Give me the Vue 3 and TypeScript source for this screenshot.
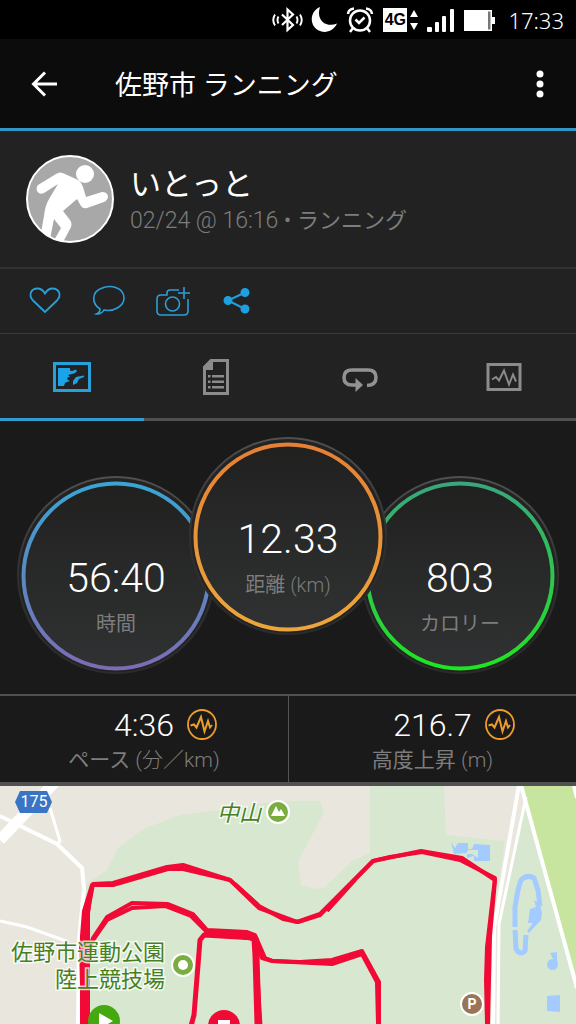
<script setup lang="ts">
interface Gauge {
  id: string
  value: string
  label: string
  unit: string
  from: string
  to: string
  raised: boolean
}

interface Stat {
  value: string
  label: string
  unit: string
}

const gauges: Gauge[] = [
  { id: 'time', value: '56:40', label: '時間', unit: '', from: '#3aa5d3', to: '#7b6db4', raised: false },
  { id: 'distance', value: '12.33', label: '距離', unit: ' (km)', from: '#e58035', to: '#eda63a', raised: true },
  { id: 'calories', value: '803', label: 'カロリー', unit: '', from: '#3aa67c', to: '#1fe61f', raised: false },
]

const stats: Stat[] = [
  { value: '4:36', label: 'ペース', unit: ' (分／km)' },
  { value: '216.7', label: '高度上昇', unit: ' (m)' },
]
</script>

<template>
  <div class="screen">
    <div class="status">
      <svg width="32" height="28" viewBox="0 0 32 28" fill="none" stroke="#fff" stroke-width="2.2">
        <path d="M10 8.500L21 19L15.500 24V3.500L21 8.500L10 19" />
        <path d="M6.500 10.500Q4.500 14 6.500 17.500M24.500 10.500Q26.500 14 24.500 17.500M3 8.500Q-.5 14 3 19.500M28 8.500Q31.500 14 28 19.500" stroke-width="1.900" />
      </svg>
      <svg class="moon" width="28" height="28" viewBox="0 0 28 28" fill="#fff">
        <path d="M10 1C1 5 0 15 4 20.500C10 29 23 27 27 17.500C17 22 5.500 15 10 1Z" />
      </svg>
      <svg class="alarm" width="28" height="28" viewBox="0 0 28 28" fill="none" stroke="#fff" stroke-width="2.500">
        <circle cx="14" cy="14.500" r="10" />
        <path d="M9.500 13.500L13 17L18.500 11.500M7 22L4 26M21 22L24 26M2 8Q2.500 3 8 2.500M26 8Q25.500 3 20 2.500" />
      </svg>
      <span class="network">4G</span>
      <svg class="updown" width="8" height="24" viewBox="0 0 8 24" fill="#fff"><path d="M0 9L4 2L8 9ZM0 15L4 22L8 15Z" /></svg>
      <svg class="signal" width="28" height="26" viewBox="0 0 28 26" fill="#fff">
        <rect y="20" width="5" height="5" rx="1" /><rect x="8" y="15" width="4" height="10" rx="1" /><rect x="15" y="9" width="4" height="16" rx="1" /><rect x="23" y="2" width="4" height="23" rx="1" />
      </svg>
      <svg class="battery" width="32" height="24" viewBox="0 0 32 24">
        <path d="M0 2H28V9H31V16H28V23H0Z" fill="#fff" /><path d="M24 3.500H26.500V21.500H24Z" fill="#777" />
      </svg>
      <span class="clock">17:33</span>
    </div>

    <header class="appbar">
      <button class="back" type="button" aria-label="Back">
        <svg width="28" height="28" viewBox="0 0 28 28" fill="none" stroke="#fff" stroke-width="3"><path d="M27 14H4M15 2.500L3.500 14L15 25.500" /></svg>
      </button>
      <h1>佐野市 ランニング</h1>
      <button class="menu" type="button" aria-label="Menu">
        <svg width="8" height="28" viewBox="0 0 8 28" fill="#fff"><circle cx="4" cy="4" r="3.500" /><circle cx="4" cy="14" r="3.500" /><circle cx="4" cy="24" r="3.500" /></svg>
      </button>
    </header>

    <section class="profile">
      <svg class="avatar" width="90" height="90" viewBox="0 0 90 90">
        <defs><clipPath id="avatar-clip"><circle cx="45" cy="45" r="43" /></clipPath></defs>
        <circle cx="45" cy="45" r="43" fill="#a8a8a8" />
        <g clip-path="url(#avatar-clip)" fill="#fff">
          <circle cx="60" cy="20" r="9" />
          <path d="M13 31L31 20Q35 17 40 20L51 25Q56 27 58 33L61 43L77 38Q82 38 83 42Q83 46 79 48L62 54Q58 55 56 52L52 45L38 57L45 66Q48 70 45 75L37 90H27L36 74L29 65L24 90H14L19 62Q20 52 24 45L33 30L19 39Q14 41 12 37Q11 33 13 31Z" />
        </g>
        <circle cx="45" cy="45" r="43" fill="none" stroke="#fff" stroke-width="2" />
      </svg>
      <div class="who">
        <h2>いとっと</h2>
        <p>02/24 @ 16:16 • <span>ランニング</span></p>
      </div>
    </section>

    <div class="actions">
      <button type="button" aria-label="Like">
        <svg width="36" height="32" viewBox="0 0 36 32" fill="none" stroke="#2a9fd8" stroke-width="1.800"><path d="M18 27L6 15.500C1 10 4 3.500 10.500 3.500C14.500 3.500 16.500 6 18 8.500C19.500 6 21.500 3.500 25.500 3.500C32 3.500 35 10 30 15.500Z" /></svg>
      </button>
      <button type="button" aria-label="Comment">
        <svg width="36" height="32" viewBox="0 0 36 32" fill="none" stroke="#2a9fd8" stroke-width="1.600"><path d="M9 24C0 18 1 7 10 3.500C20 -1 33 3 33 13C33 21 23 27 13 25C12 27 9 29.500 5.500 29C8 28 9 26 9 24Z" /></svg>
      </button>
      <button type="button" aria-label="Add photo">
        <svg width="36" height="32" viewBox="0 0 36 32" fill="none" stroke="#2a9fd8" stroke-width="1.600"><path d="M24 5H15Q12 5 12 8V10H6Q2 10 2 14V26Q2 30 6 30H29Q33 30 33 26V14M29 2V14M23 8H35" /><circle cx="17.500" cy="19" r="7" /></svg>
      </button>
      <button type="button" aria-label="Share">
        <svg width="36" height="32" viewBox="0 0 36 32" fill="#1e9fe0" stroke="#1e9fe0" stroke-width="2"><path d="M26 7.500L9 15.500L26 24" fill="none" /><circle cx="26" cy="7.500" r="3.500" /><circle cx="9" cy="15.500" r="3.500" /><circle cx="26" cy="24" r="3.500" /></svg>
      </button>
    </div>

    <nav class="tabs" role="tablist">
      <button class="active" type="button" role="tab" aria-selected="true" aria-label="Map">
        <svg width="40" height="40" viewBox="0 0 40 40"><rect x="2.500" y="6.500" width="35" height="27" fill="none" stroke="#2aa0d8" stroke-width="3" /><path d="M6 11H18V13.500L20 14L24 12.500L25 14.500L22 16.500L16 18L18 19.500L15 21L16 23L18 24L15 25L13 26L12 29H6ZM21 28V24L24 20L32 18.500V20L27 22L25 26Z" fill="#1aa3e8" /></svg>
      </button>
      <button type="button" role="tab" aria-selected="false" aria-label="Details">
        <svg width="40" height="40" viewBox="0 0 40 40"><path d="M15 3.500H31.500V36.500H8.500V10Z" fill="none" stroke="#8b8b8b" stroke-width="3" /><path d="M8 13H17V3L15 3L8 9ZM12 18H14.500V20.500H12ZM16 18H28V20.500H16ZM12 23.500H14.500V26H12ZM16 23.500H28V26H16ZM12 29H14.500V31.500H12ZM16 29H28V31.500H16Z" fill="#8b8b8b" /></svg>
      </button>
      <button type="button" role="tab" aria-selected="false" aria-label="Laps">
        <svg width="40" height="40" viewBox="0 0 40 40"><path d="M17 28H12Q4 28 4 20.500Q4 13 12 13H28Q36 13 36 20.500Q36 28 27 28.500" fill="none" stroke="#929292" stroke-width="3.500" /><path d="M15.500 21L23 28L15.500 35Z" fill="#929292" /></svg>
      </button>
      <button type="button" role="tab" aria-selected="false" aria-label="Charts">
        <svg width="40" height="40" viewBox="0 0 40 40" fill="none" stroke="#8b8b8b"><rect x="4" y="7.500" width="32" height="25" stroke-width="3" /><path d="M8 22.500L12 20L15 23.500L20 13.500L25 27.500L29 17.500L32 24.500" stroke-width="2" /></svg>
      </button>
    </nav>

    <section class="gauges">
      <div v-for="g in gauges" :key="g.id" class="gauge" :class="{ raised: g.raised }">
        <svg class="ring" width="198" height="198" viewBox="0 0 198 198">
          <defs>
            <linearGradient :id="g.id + '-ring'" x1="0" y1="0" x2="0" y2="1"><stop offset="0" :stop-color="g.from" /><stop offset="1" :stop-color="g.to" /></linearGradient>
            <linearGradient :id="g.id + '-face'" x1="0" y1="0" x2="0" y2="1"><stop offset="0" stop-color="#20211f" /><stop offset="1" stop-color="#303132" /></linearGradient>
            <linearGradient :id="g.id + '-edge'" x1="0" y1="0" x2="0" y2="1"><stop offset="0" stop-color="#505050" /><stop offset=".5" stop-color="#303030" /><stop offset="1" stop-color="#2b2b2b" /></linearGradient>
          </defs>
          <circle cx="99" cy="99" r="98" fill="#232323" :stroke="`url(#${g.id}-edge)`" stroke-width="2" />
          <circle cx="99" cy="100" r="92.500" :fill="`url(#${g.id}-face)`" :stroke="`url(#${g.id}-ring)`" stroke-width="4" />
        </svg>
        <div class="reading">
          <strong>{{ g.value }}</strong>
          <span class="caption">{{ g.label }}<small v-if="g.unit">{{ g.unit }}</small></span>
        </div>
      </div>
    </section>

    <section class="stats">
      <div v-for="s in stats" :key="s.label" class="stat">
        <div class="figure">
          <span>{{ s.value }}</span>
          <svg width="32" height="34" viewBox="0 0 32 34" fill="none" stroke="#ed9d2c"><ellipse cx="16" cy="16.500" rx="14" ry="14.500" stroke-width="1.800" /><path d="M4.500 17.500L8 16.500L10.500 19.500L15 9L18.500 23.500L22 13L24 19.500L26 17" stroke-width="2" /></svg>
        </div>
        <p class="caption">{{ s.label }}<small>{{ s.unit }}</small></p>
      </div>
    </section>

    <section class="map">
      <svg viewBox="0 0 576 238" preserveAspectRatio="xMidYMin slice">
        <rect width="576" height="238" fill="#e9e6dd" />
        <path d="M88 97L107 84L118 62L143 43L180 29L220 24L278 15H320L324 26L298 76L301 99L316 103L325 101L352 75L370 67V0H444L446 49L505 55L492 142V238H80V150L84 103Z" fill="#d8e8d0" />
        <path d="M526 10L500 138V238H576V0H526Z" fill="#d8e8d0" />
        <path d="M522 0H576V200Z" fill="#c8e59f" />
        <g fill="none" stroke="#fff">
          <path d="M56 -5L0 54" stroke-width="11" />
          <path d="M0 30L57 58L82 82L84 103L79 154L78 238" stroke-width="4" />
          <path d="M50 22L60 55L57 58M0 135L27 141L66 155" stroke-width="3" />
          <path d="M519 -1L494 142L493 238" stroke-width="4" />
          <path d="M526 11L499 138L498 238" stroke-width="3" />
          <path d="M521 -1L577 202M574 0L577 12" stroke-width="4" />
        </g>
        <g fill="#a3cbff">
          <path d="M451 56L455 62L458 57H468V63H472L474 58L490 59V75H474V70L467 72V67L454 68Z" />
          <path d="M530 123L536 121L534 114L540 118L542 127L541 134L529 147L527 145L533 137H528Z" />
          <circle cx="552.500" cy="178.500" r="5.500" /><path d="M550 167L557 166V177L553 173Z" /><path d="M547 210L560 209V226L547 225Z" />
        </g>
        <g fill="none" stroke="#a3cbff" stroke-width="5" stroke-linejoin="round">
          <path d="M515 141V121L518 104L521 94Q527 88 534 92L538 104L540 120" />
          <path d="M515 144L516 163Q520 170 525 165L526 149" />
        </g>
        <path d="M468 64L478 64V72L472 68H466Z" fill="#d8e8d0" />
        <g fill="none" stroke="#f00a35" stroke-width="4" stroke-linejoin="round">
          <path d="M82 238L82 150L84 125L92 99L113 99L168 83L183 83L230 94L259 120L283 133L298 136L320 129L373 75L390 71L422 66L460 74L495 92L494 101L487 161L486 194L487 238" />
          <path d="M88 238L88 125L93 98L113 97L167 81L183 79L230 94L259 122L297 136L320 128L353 95L373 75L421 65L462 72L495 94L490 150L488 238" />
          <path d="M83 238L81 160L92 101M84 160L91 103M327 125L355 94M235 98L258 119" />
          <path d="M85 238V160" stroke-width="9" />
          <path d="M88 238V171L93 152L107 131L132 117L168 118L193 128L207 144L247 146L255 149L265 172L273 175L300 176L332 174L362 165L379 196L379 238" />
          <path d="M91 157L107 134L132 122L165 120L191 130L206 145L254 153L262 172L272 175L332 178L362 168L377 196L378 238" />
          <path d="M191 240L194 229L200 154L204 149L255 152L258 207L260 240" stroke-width="5" />
          <path d="M204 147L247 148L255 153L256 170L258 238" stroke-width="7" />
        </g>
        <g class="place">
          <text x="217" y="35" font-style="italic">中山</text>
          <text x="165" y="174" text-anchor="end">佐野市運動公園</text>
          <text x="165" y="201" text-anchor="end">陸上競技場</text>
        </g>
        <path d="M20 5H47L52 16L47 27H20L15 16Z" fill="#3975c4" />
        <text class="route" x="34" y="21" text-anchor="middle">175</text>
        <g stroke="#fff" stroke-width="2">
          <circle cx="278" cy="26" r="11" fill="#79ad3f" />
          <circle cx="183" cy="179" r="11" fill="#79ad3f" />
          <circle cx="472" cy="218" r="11" fill="#997458" />
        </g>
        <path d="M271 30L276 20L279 26L281 23L285 30Z" fill="#fff" />
        <circle cx="183" cy="179" r="5" fill="#fff" />
        <text class="parking" x="472" y="223" text-anchor="middle">P</text>
        <circle cx="104" cy="235" r="16" fill="#44a911" />
        <path d="M99 227L113 235L99 243Z" fill="#fff" />
        <circle cx="224" cy="240" r="16" fill="#f00a35" />
        <rect x="218" y="234" width="12" height="12" fill="#fff" />
      </svg>
    </section>
  </div>
</template>

<style>
body {
  margin: 0;
  background: #1a1a1a;
}
</style>

<style scoped>
.screen {
  display: flex;
  flex-direction: column;
  height: 100vh;
  overflow: hidden;
  background: #1a1a1a;
  color: #fff;
  font-family: Roboto, "Noto Sans CJK JP", sans-serif;
  font-weight: 300;
}
.screen > * {
  flex-shrink: 0;
  box-sizing: border-box;
}
h1, h2, p {
  margin: 0;
  font-weight: 400;
}
svg {
  display: block;
}
button {
  display: flex;
  align-items: center;
  justify-content: center;
  padding: 0;
  border: 0;
  background: none;
  cursor: pointer;
}
.status {
  display: flex;
  align-items: center;
  justify-content: flex-end;
  height: 39px;
  padding: 0 12px 0 0;
  background: #000;
}
.moon {
  margin-left: 6px;
}
.alarm {
  margin-left: 8px;
}
.network {
  width: 24px;
  margin-left: 9px;
  background: #fff;
  color: #000;
  font: bold 16px/24px "Liberation Sans", sans-serif;
  text-align: center;
}
.updown {
  margin-left: 3px;
}
.signal {
  margin-left: 9px;
}
.battery {
  margin-left: 9px;
}
.clock {
  margin-left: 12px;
  font: 300 22px/28px "Noto Sans", sans-serif;
}
.appbar {
  display: flex;
  align-items: center;
  height: 92px;
  padding: 0 12px 0 16px;
  border-bottom: 3px solid #2f96c8;
  background: #0c0c0c;
}
.back {
  width: 56px;
  height: 56px;
}
.menu {
  width: 48px;
  height: 56px;
}
h1 {
  flex: 1;
  padding: 4px 0 0 43px;
  font-size: 27px;
  line-height: 40px;
}
.profile {
  display: flex;
  align-items: center;
  gap: 15px;
  height: 138px;
  padding: 0 25px;
  border-bottom: 2px solid #313131;
  background: #222;
}
.who {
  padding-top: 4px;
}
h2 {
  font-size: 31px;
  line-height: 40px;
}
.who p {
  color: #7d7d7d;
  font-size: 23px;
  font-weight: 300;
  line-height: 32px;
}
.who span {
  font-size: 22px;
  font-weight: 400;
}
.actions {
  display: flex;
  align-items: center;
  gap: 28px;
  height: 65px;
  padding: 0 27px;
  border-bottom: 1px solid #3a3a3a;
  background: #222;
}
.tabs {
  display: grid;
  grid-template-columns: repeat(4, 1fr);
  height: 87px;
  background: #222;
}
.tabs button {
  padding-top: 2px;
  border-bottom: 3px solid #505050;
}
.tabs .active {
  border-color: #2f9dd2;
}
.gauges {
  display: flex;
  justify-content: center;
  align-items: flex-end;
  height: 273px;
  padding-bottom: 20px;
}
.gauge {
  display: grid;
  width: 198px;
  height: 198px;
  margin: 0 -13px;
}
.raised {
  z-index: 1;
  align-self: flex-start;
  margin-top: 16px;
}
.ring,
.reading {
  grid-area: 1 / 1;
}
.reading {
  display: flex;
  flex-direction: column;
  gap: 8px;
  padding-top: 78px;
  text-align: center;
}
.reading strong {
  font-size: 41px;
  font-weight: 300;
  line-height: 48px;
}
.caption {
  color: #7d7d7d;
  font-size: 20px;
  font-weight: 400;
  line-height: 28px;
}
.caption small {
  font-size: inherit;
  font-weight: 300;
  white-space: pre;
}
.stats {
  display: grid;
  grid-template-columns: 1fr 1fr;
  height: 92px;
  border-top: 2px solid #505050;
  border-bottom: 4px solid #505050;
}
.stat {
  padding-top: 10px;
  text-align: center;
}
.stat + .stat {
  border-left: 1px solid #555;
}
.figure {
  display: flex;
  align-items: center;
  justify-content: center;
  gap: 12px;
  padding-left: 44px;
  font-size: 32px;
  line-height: 38px;
}
.stat p {
  font-size: 21px;
  line-height: 32px;
}
.screen > .map {
  flex: 1 1 0;
  min-height: 0;
}
.map svg {
  width: 100%;
  height: 100%;
}
.place text {
  fill: #45811f;
  stroke: #fff;
  stroke-width: 3px;
  stroke-opacity: .75;
  paint-order: stroke;
  font: 400 22px "Noto Sans CJK JP", sans-serif;
}
.place text[font-style] {
  font-style: italic;
}
.route {
  fill: #fff;
  font: 400 16px Roboto, sans-serif;
}
.parking {
  fill: #fff;
  font: bold 14px Roboto, sans-serif;
}
</style>
